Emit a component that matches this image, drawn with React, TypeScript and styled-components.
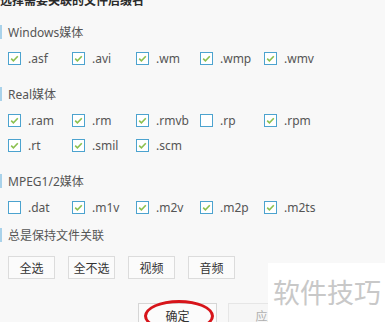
import React from "react";
import styled, { createGlobalStyle } from "styled-components";

const GlobalStyle = createGlobalStyle`
  html, body {
    margin: 0;
    padding: 0;
    background: #f8f8f8;
    overflow: hidden;
  }
  body {
    font-family: "Noto Sans", "Noto Sans CJK SC", sans-serif;
  }
`;

const groups = [
  {
    title: "Windows媒体",
    items: [
      { ext: ".asf", checked: true },
      { ext: ".avi", checked: true },
      { ext: ".wm", checked: true },
      { ext: ".wmp", checked: true },
      { ext: ".wmv", checked: true },
    ],
  },
  {
    title: "Real媒体",
    items: [
      { ext: ".ram", checked: true },
      { ext: ".rm", checked: true },
      { ext: ".rmvb", checked: true },
      { ext: ".rp", checked: false },
      { ext: ".rpm", checked: true },
      { ext: ".rt", checked: true },
      { ext: ".smil", checked: true },
      { ext: ".scm", checked: true },
    ],
  },
  {
    title: "MPEG1/2媒体",
    items: [
      { ext: ".dat", checked: false },
      { ext: ".m1v", checked: true },
      { ext: ".m2v", checked: true },
      { ext: ".m2p", checked: true },
      { ext: ".m2ts", checked: true },
    ],
  },
];

const quickButtons = ["全选", "全不选", "视频", "音频"];

const Check = ({ checked }: { checked: boolean }) => (
  <Box>
    {checked && (
      <svg width="11" height="11" viewBox="0 0 11 11">
        <path d="M2.2 5.6 L4.4 7.8 L8.8 3.2" fill="none" stroke="#8cc04f" strokeWidth="1.6" />
      </svg>
    )}
  </Box>
);

const App = () => {
  return (
    <Page>
      <GlobalStyle />
      <Title>选择需要关联的文件后缀名</Title>
      {groups.map((group) => (
        <Section key={group.title}>
          <Header>{group.title}</Header>
          <Grid>
            {group.items.map((item) => (
              <Option key={item.ext}>
                <Check checked={item.checked} />
                <Label>{item.ext}</Label>
              </Option>
            ))}
          </Grid>
        </Section>
      ))}
      <AlwaysHeader>总是保持文件关联</AlwaysHeader>
      <ButtonRow>
        {quickButtons.map((b) => (
          <SmallButton key={b}>{b}</SmallButton>
        ))}
      </ButtonRow>
      <Footer>
        <FooterButton>
          确定
          <Circle />
        </FooterButton>
        <FooterButton disabled>应用</FooterButton>
      </Footer>
      <Watermark>软件技巧</Watermark>
    </Page>
  );
};

const Page = styled.div`
  position: relative;
  width: 385px;
  height: 322px;
  padding-left: 8px;
  box-sizing: border-box;
  overflow: hidden;
  background: #f8f8f8;
`;

const Title = styled.div`
  margin: -9px 0 0 -8px;
  height: 20px;
  line-height: 20px;
  font-size: 12px;
  font-weight: 700;
  color: #2b2b2b;
  white-space: nowrap;
`;

const Section = styled.section`
  margin-top: 14px;
  & + & {
    margin-top: 16px;
  }
`;

const Header = styled.div`
  display: flex;
  align-items: center;
  height: 14px;
  margin-left: -8px;
  padding-left: 6px;
  border-left: 2px solid #a9d2ea;
  font-size: 12px;
  color: #555;
  white-space: nowrap;
`;

const AlwaysHeader = styled(Header)`
  margin-top: 8px;
`;

const Grid = styled.div`
  display: grid;
  grid-template-columns: repeat(5, 64px);
  grid-auto-rows: 25px;
  margin-top: 7px;
`;

const Option = styled.div`
  display: flex;
  align-items: center;
  gap: 7px;
`;

const Box = styled.span`
  display: flex;
  align-items: center;
  justify-content: center;
  width: 13px;
  height: 13px;
  box-sizing: border-box;
  border: 1px solid #4ca3cf;
  background: #fff;
`;

const Label = styled.span`
  font-size: 12px;
  color: #555;
`;

const ButtonRow = styled.div`
  display: flex;
  gap: 13px;
  margin-top: 14px;
`;

const SmallButton = styled.div`
  display: flex;
  align-items: center;
  justify-content: center;
  width: 47px;
  height: 23px;
  box-sizing: border-box;
  border: 1px solid #dcdcdc;
  background: #fbfbfb;
  font-size: 12px;
  color: #333;
`;

const Footer = styled.div`
  display: flex;
  gap: 11px;
  margin-top: 24px;
  padding-left: 130px;
`;

const FooterButton = styled.div<{ disabled?: boolean }>`
  position: relative;
  display: flex;
  align-items: center;
  justify-content: center;
  width: 79px;
  height: 26px;
  box-sizing: border-box;
  border: 1px solid ${(p) => (p.disabled ? "#e6e6e6" : "#d6d6d6")};
  background: ${(p) => (p.disabled ? "#f6f6f6" : "#fbfbfb")};
  font-size: 12px;
  color: ${(p) => (p.disabled ? "#b0b0b0" : "#333")};
`;

const Circle = styled.span`
  position: absolute;
  left: 5px;
  top: -4px;
  width: 70px;
  height: 32px;
  box-sizing: border-box;
  border: 3px solid #d7141a;
  border-radius: 50%;
`;

const Watermark = styled.div`
  position: absolute;
  left: 268px;
  top: 263px;
  right: 0;
  bottom: 0;
  background: #fff;
  padding: 12px 0 0 5px;
  font-family: "Noto Sans CJK SC", sans-serif;
  font-size: 27px;
  line-height: 34px;
  color: #c8c8c8;
  white-space: nowrap;
`;

export default App;
